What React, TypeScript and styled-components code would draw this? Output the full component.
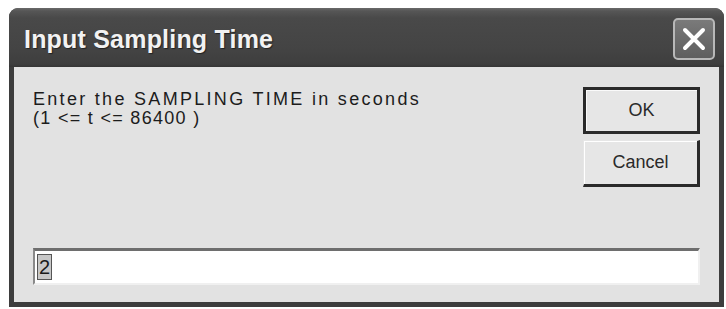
import * as React from "react";
import styled, { createGlobalStyle } from "styled-components";

const GlobalStyle = createGlobalStyle`
    html, body {
        margin: 0;
        padding: 0;
        background: #ffffff;
        width: 726px;
        height: 309px;
        overflow: hidden;
    }
`;

const Page = styled.div`
    padding: 8px 2px 2px 9px;
    width: 726px;
    height: 309px;
    box-sizing: border-box;
`;

const Window = styled.div`
    display: flex;
    flex-direction: column;
    height: 100%;
    border-radius: 9px 9px 0 0;
    background: #3d3d3d;
    overflow: hidden;
`;

const TitleBar = styled.div`
    height: 59px;
    display: flex;
    align-items: center;
    justify-content: space-between;
    padding: 0 9px 0 15px;
    background: linear-gradient(
        to bottom,
        #6a6a6a 0px,
        #565656 3px,
        #494949 10px,
        #444444 40px,
        #3e3e3e 56px,
        #353535 59px
    );
`;

const Title = styled.span`
    font-family: "Liberation Sans", Arial, sans-serif;
    font-weight: bold;
    font-size: 25px;
    letter-spacing: 0.2px;
    color: #f2f2f2;
    text-shadow: 1px 1px 1px #222;
    margin-top: 3px;
`;

const CloseButton = styled.div`
    width: 42px;
    height: 42px;
    box-sizing: border-box;
    border: 2px solid #b8b8b8;
    border-radius: 5px;
    background: linear-gradient(to bottom, #7a7a7a, #5e5e5e);
    display: flex;
    align-items: center;
    justify-content: center;
    margin-top: 3px;
`;

const Body = styled.div`
    flex: 1;
    margin: 0 5px 5px 5px;
    background: #e2e2e2;
    display: flex;
    flex-direction: column;
    justify-content: space-between;
    padding: 23px 19px 17px 19px;
    font-family: "Liberation Sans", Arial, sans-serif;
    color: #1c1c1c;
`;

const TopRow = styled.div`
    display: flex;
    justify-content: space-between;
    align-items: flex-start;
`;

const Message = styled.div`
    margin-top: 0;
`;

const MessageLine = styled.div<{ $spacing: number }>`
    font-size: 18px;
    line-height: 19px;
    letter-spacing: ${(p) => p.$spacing}px;
    white-space: nowrap;
`;

const ButtonColumn = styled.div`
    display: flex;
    flex-direction: column;
    gap: 6px;
    margin-top: -3px;
`;

const DialogButton = styled.button<{ $default?: boolean }>`
    width: 117px;
    height: 47px;
    box-sizing: border-box;
    font-family: "Liberation Sans", Arial, sans-serif;
    font-size: 18px;
    color: #2a2a2a;
    background: #e6e6e6;
    border: ${(p) => (p.$default ? "3px solid #2a2a2a" : "1px solid #e6e6e6")};
    border-right: 3px solid #2a2a2a;
    border-bottom: 3px solid #2a2a2a;
    box-shadow: ${(p) => (p.$default ? "inset 1px 1px 0 #fafafa" : "inset 1px 1px 0 #ffffff")};
    padding: 0;
`;

const InputBox = styled.div`
    height: 37px;
    box-sizing: border-box;
    background: #ffffff;
    border-top: 3px solid #6e6e6e;
    border-left: 2px solid #8a8a8a;
    border-bottom: 2px solid #f0f0f0;
    border-right: 2px solid #f0f0f0;
    display: flex;
    align-items: center;
    padding-left: 2px;
    font-family: "Liberation Sans", Arial, sans-serif;
    font-size: 20px;
`;

const Selected = styled.span`
    display: inline-block;
    padding: 0 1px;
    border: 1px solid #555;
    background: #c8c8c8;
    color: #1a1a1a;
    line-height: 24px;
`;

export default function App() {
    return (
        <>
            <GlobalStyle />
            <Page>
                <Window>
                    <TitleBar>
                        <Title>Input Sampling Time</Title>
                        <CloseButton>
                            <svg width="26" height="26" viewBox="0 0 26 26">
                                <path d="M4 4 L22 22 M22 4 L4 22" stroke="#ffffff" strokeWidth="4" strokeLinecap="round" />
                            </svg>
                        </CloseButton>
                    </TitleBar>
                    <Body>
                        <TopRow>
                            <Message>
                                <MessageLine $spacing={2.3}>Enter the SAMPLING TIME in seconds</MessageLine>
                                <MessageLine $spacing={1.3}>(1 &lt;= t &lt;= 86400 )</MessageLine>
                            </Message>
                            <ButtonColumn>
                                <DialogButton $default>OK</DialogButton>
                                <DialogButton>Cancel</DialogButton>
                            </ButtonColumn>
                        </TopRow>
                        <InputBox>
                            <Selected>2</Selected>
                        </InputBox>
                    </Body>
                </Window>
            </Page>
        </>
    );
}
